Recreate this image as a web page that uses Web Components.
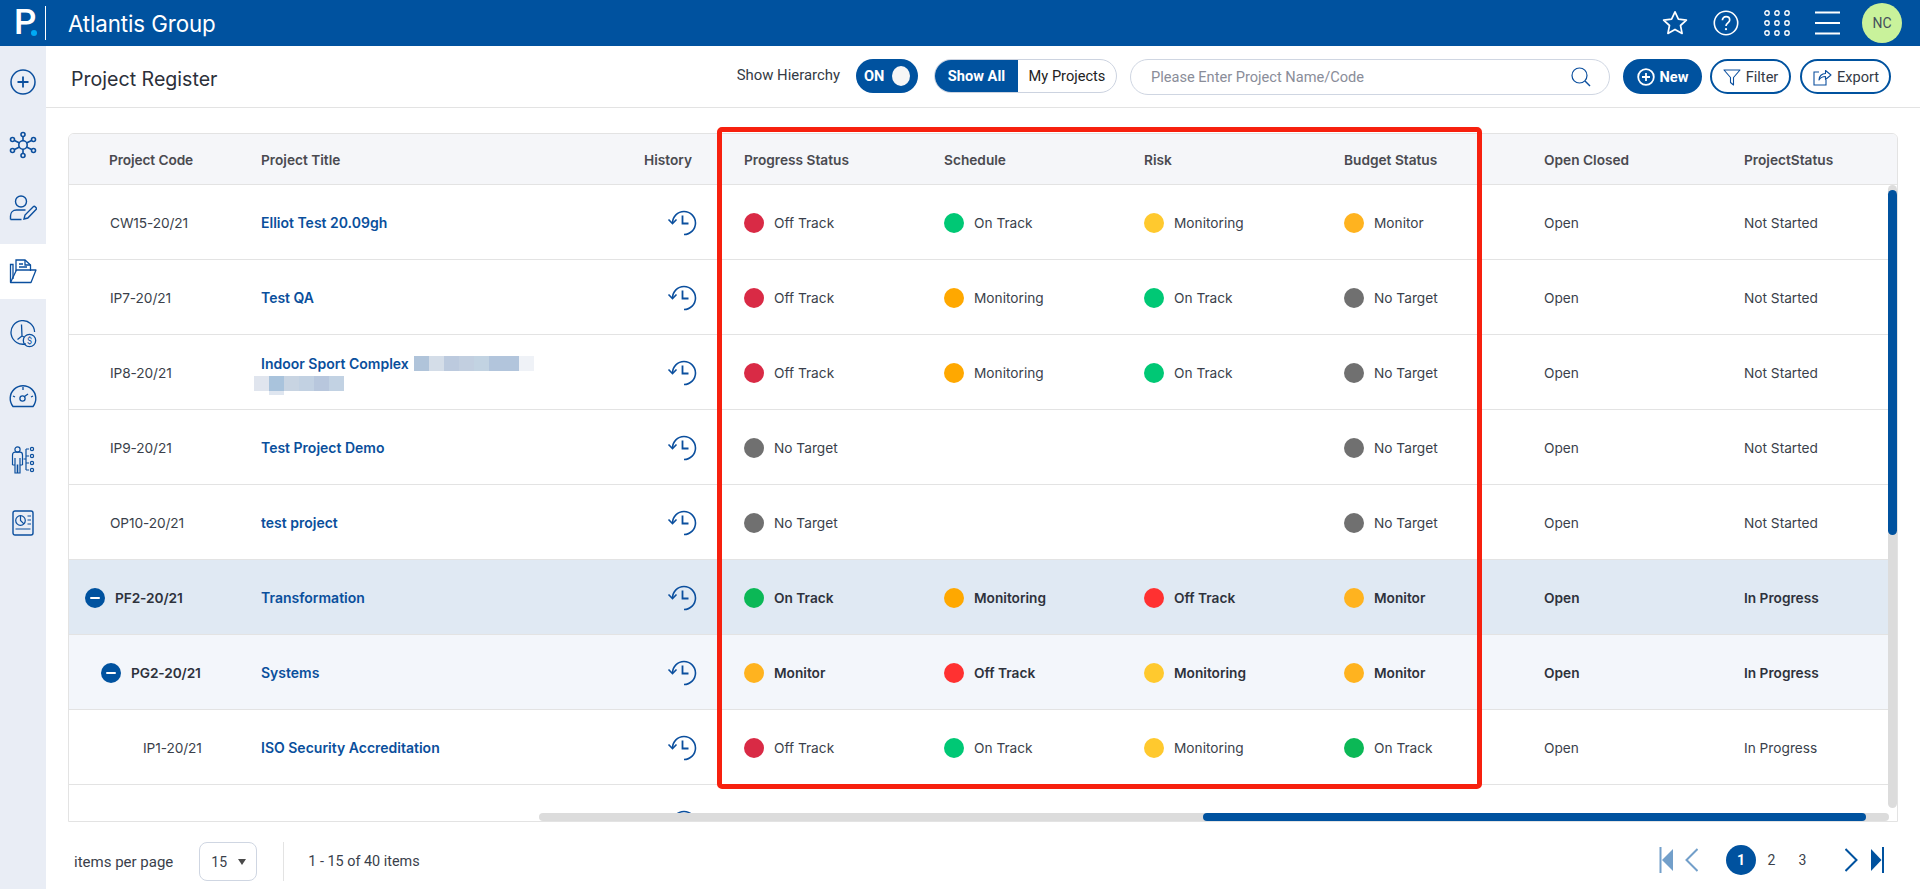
<!DOCTYPE html>
<html lang="en"><head><meta charset="utf-8"><title>Project Register</title>
<style>
html,body{margin:0;height:889px;overflow:hidden;background:#fff;font-family:Inter,"Liberation Sans",sans-serif;color:#3a3f4b}
</style></head><body>
<app-shell>
  <app-header slot="header" company="Atlantis Group" initials="NC"></app-header>
  <side-nav slot="nav"></side-nav>
  <page-toolbar slot="toolbar" heading="Project Register"></page-toolbar>
  <reg-table slot="table">
    <reg-row head><code-cell nudge>Project Code</code-cell><reg-cell>Project Title</reg-cell><reg-cell>History</reg-cell><reg-cell>Progress Status</reg-cell><reg-cell>Schedule</reg-cell><reg-cell>Risk</reg-cell><reg-cell>Budget Status</reg-cell><reg-cell>Open Closed</reg-cell><reg-cell>ProjectStatus</reg-cell></reg-row>

    <reg-row><code-cell>CW15-20/21</code-cell><title-cell>Elliot Test 20.09gh</title-cell><hist-cell></hist-cell><status-cell tone="crimson">Off Track</status-cell><status-cell tone="green">On Track</status-cell><status-cell tone="yellow">Monitoring</status-cell><status-cell tone="amber">Monitor</status-cell><reg-cell>Open</reg-cell><reg-cell>Not Started</reg-cell></reg-row>

    <reg-row><code-cell>IP7-20/21</code-cell><title-cell>Test QA</title-cell><hist-cell></hist-cell><status-cell tone="crimson">Off Track</status-cell><status-cell tone="orange">Monitoring</status-cell><status-cell tone="green">On Track</status-cell><status-cell tone="grey">No Target</status-cell><reg-cell>Open</reg-cell><reg-cell>Not Started</reg-cell></reg-row>

    <reg-row><code-cell>IP8-20/21</code-cell><title-cell>Indoor Sport Complex <blur-patch></blur-patch></title-cell><hist-cell></hist-cell><status-cell tone="crimson">Off Track</status-cell><status-cell tone="orange">Monitoring</status-cell><status-cell tone="green">On Track</status-cell><status-cell tone="grey">No Target</status-cell><reg-cell>Open</reg-cell><reg-cell>Not Started</reg-cell></reg-row>

    <reg-row><code-cell>IP9-20/21</code-cell><title-cell>Test Project Demo</title-cell><hist-cell></hist-cell><status-cell tone="grey">No Target</status-cell><reg-cell></reg-cell><reg-cell></reg-cell><status-cell tone="grey">No Target</status-cell><reg-cell>Open</reg-cell><reg-cell>Not Started</reg-cell></reg-row>

    <reg-row><code-cell>OP10-20/21</code-cell><title-cell>test project</title-cell><hist-cell></hist-cell><status-cell tone="grey">No Target</status-cell><reg-cell></reg-cell><reg-cell></reg-cell><status-cell tone="grey">No Target</status-cell><reg-cell>Open</reg-cell><reg-cell>Not Started</reg-cell></reg-row>

    <reg-row bold tint="strong"><code-cell level="1" toggle>PF2-20/21</code-cell><title-cell>Transformation</title-cell><hist-cell></hist-cell><status-cell tone="leaf">On Track</status-cell><status-cell tone="orange">Monitoring</status-cell><status-cell tone="red">Off Track</status-cell><status-cell tone="amber">Monitor</status-cell><reg-cell>Open</reg-cell><reg-cell>In Progress</reg-cell></reg-row>

    <reg-row bold tint="soft"><code-cell level="2" toggle>PG2-20/21</code-cell><title-cell>Systems</title-cell><hist-cell></hist-cell><status-cell tone="amber">Monitor</status-cell><status-cell tone="red">Off Track</status-cell><status-cell tone="yellow">Monitoring</status-cell><status-cell tone="amber">Monitor</status-cell><reg-cell>Open</reg-cell><reg-cell>In Progress</reg-cell></reg-row>

    <reg-row><code-cell level="3">IP1-20/21</code-cell><title-cell>ISO Security Accreditation</title-cell><hist-cell></hist-cell><status-cell tone="crimson">Off Track</status-cell><status-cell tone="green">On Track</status-cell><status-cell tone="yellow">Monitoring</status-cell><status-cell tone="leaf">On Track</status-cell><reg-cell>Open</reg-cell><reg-cell>In Progress</reg-cell></reg-row>

    <reg-row><reg-cell></reg-cell><reg-cell></reg-cell><hist-cell></hist-cell><status-cell tone="crimson"></status-cell><status-cell tone="crimson"></status-cell><status-cell tone="crimson"></status-cell><status-cell tone="amber"></status-cell><reg-cell></reg-cell><reg-cell></reg-cell></reg-row>
  </reg-table>
  <pager-bar slot="footer"></pager-bar>
</app-shell>
<script>
const BLUE='#00529f';
function def(name,html,init){
  customElements.define(name,class extends HTMLElement{
    constructor(){super();const r=this.attachShadow({mode:'open'});r.innerHTML=typeof html==='function'?html(this):html;}
    connectedCallback(){
      if(typeof html==='function') this.shadowRoot.innerHTML=html(this);
      if(init) init(this);
    }
  });
}
const ic=(w,h,vb,body,extra='')=>`<svg width="${w}" height="${h}" viewBox="${vb}" fill="none" stroke="currentColor" ${extra}>${body}</svg>`;

def('app-shell',`<style>
:host{display:grid;grid-template:46px 1fr/46px 1fr;height:889px;width:1920px;overflow:hidden}
.h{grid-column:1/3}.n{grid-row:2}
.m{grid-row:2;grid-column:2;display:flex;flex-direction:column;min-width:0;min-height:0}
</style>
<div class="h"><slot name="header"></slot></div>
<div class="n"><slot name="nav"></slot></div>
<div class="m"><slot name="toolbar"></slot><slot name="table"></slot><slot name="footer"></slot></div>`);

def('app-header',el=>`<style>
:host{display:flex;align-items:center;height:46px;background:${BLUE};color:#fff}
.logo{width:45px;height:34px;border-right:1px solid #fff;position:relative;font:500 35px/34px Roboto,sans-serif;box-sizing:content-box;display:flex;justify-content:flex-start}
.logo b{font-weight:500;margin-left:14px;line-height:34px}
.logo i{position:absolute;left:31px;top:24px;width:6px;height:6px;border-radius:50%;background:#00aaf5}
.co{margin-left:22px;font-size:22.3px;font-weight:400;letter-spacing:-.1px}
.r{margin-left:auto;display:flex;align-items:center;margin-right:18px}
.r>*{display:block}
.av{width:40px;height:40px;border-radius:50%;background:#c9f29b;color:#44505c;font:400 14px/40px Roboto,sans-serif;text-align:center;margin-left:22px}
</style>
<div class="logo"><b>P</b><i></i></div><div class="co">${el.getAttribute('company')||''}</div>
<div class="r">
${ic(26,26,'0 0 26 26','<path d="M13 1.8l3.400 7.400 8 .9-5.900 5.400 1.600 7.900-7.100-4-7.100 4 1.600-7.900L1.600 10.100l8-.9z" stroke-width="1.700" stroke-linejoin="round"/>')}
<span style="width:25px"></span>
${ic(26,26,'0 0 26 26','<circle cx="13" cy="13" r="11.700" stroke-width="1.600"/><path d="M9.400 10.200c0-2.300 1.700-3.600 3.700-3.600s3.600 1.300 3.600 3.300c0 2.900-3.700 2.900-3.700 6" stroke-width="1.700"/><circle cx="13" cy="19.200" r="1.100" fill="currentColor" stroke="none"/>')}
<span style="width:25px"></span>
${ic(26,26,'0 0 26 26',[3,13,23].flatMap(y=>[3,13,23].map(x=>`<circle cx="${x}" cy="${y}" r="2.200" stroke-width="1.400"/>`)).join(''))}
<span style="width:25px"></span>
${ic(25,26,'0 0 25 26','<path d="M0 2.500h25M0 13h25M0 23.500h25" stroke-width="1.800"/>')}
<div class="av">${el.getAttribute('initials')||''}</div>
</div>`);

const navIcons=[
ic(26,26,'0 0 26 26','<circle cx="13" cy="13" r="12" stroke-width="1.500"/><path d="M13 7.500v11M7.500 13h11" stroke-width="1.800"/>'),
ic(30,30,'0 0 30 30','<circle cx="15" cy="15" r="4.200"/><path d="M15 11V7M15 19v4M11.500 13l-5-2.500M18.500 13l5-2.500M11.500 17l-5 2.500M18.500 17l5 2.500" /><circle cx="15" cy="4.500" r="2"/><circle cx="15" cy="25.500" r="2"/><circle cx="4.500" cy="9.500" r="2"/><circle cx="25.500" cy="9.500" r="2"/><circle cx="4.500" cy="20.500" r="2"/><circle cx="25.500" cy="20.500" r="2"/>','stroke-width="1.600"'),
ic(28,28,'0 0 28 28','<circle cx="12" cy="7.500" r="5.500"/><path d="M1.500 25.500v-3.500c0-3.500 2.500-6 6-6h9M1.500 25.500h11"/><path d="M15 25l1-4 8.500-8.500c1-.9 3.800 1.800 2.800 2.800L18.800 24z"/>','stroke-width="1.400"'),
ic(28,26,'0 0 28 26','<path d="M4 21V6.500H1.500V24"/><path d="M7 13V2h9l5.500 5V13" /><path d="M16 2v5h5.500M10 6h4M10 9h8"/><path d="M1.500 24.500h20.500L27 12H7.500z" stroke-linejoin="round"/>','stroke-width="1.300"'),
ic(28,28,'0 0 28 28','<path d="M17 23.800A11.800 11.800 0 1 1 25.600 12"/><path d="M12.500 4.500L13 16l-4.500 3.500M13 16l2 1"/><circle cx="20.500" cy="20.500" r="6.200"/><text x="20.500" y="23.800" font-size="9" text-anchor="middle" fill="currentColor" stroke="none" font-family="Roboto">$</text>','stroke-width="1.300"'),
ic(28,24,'0 0 28 24','<path d="M4 21.500a12.800 12.800 0 1 1 20 0z" stroke-linejoin="round" stroke-width="1.400"/><path d="M14 2v3M4 11l2 1M24 11l-2 1"/><circle cx="13.500" cy="13.500" r="2.600"/><path d="M15.500 11.500L19 9"/>','stroke-width="1.300"'),
ic(24,28,'0 0 24 28','<circle cx="6.500" cy="3.500" r="2.600"/><path d="M1.500 19V9c0-2 1.200-2.800 2.500-2.800h5c1.300 0 2.500.8 2.500 2.800v10M4 12v15h2.300V19h.4v8H9V12M1.500 19H4M9 19h2.500"/><path d="M12.500 13h2.500M15 3h3M15 10h3M15 17h3M15 24h3M15 3v21"/><circle cx="21" cy="3" r="1.600"/><circle cx="21" cy="10" r="1.600"/><circle cx="21" cy="17" r="1.600"/><circle cx="21" cy="24" r="1.600"/>','stroke-width="1.200"'),
ic(22,26,'0 0 22 26','<rect x="1" y="1" width="20" height="24" rx="2" stroke-width="1.400"/><circle cx="8.500" cy="10.500" r="4.800"/><path d="M8.500 5.700v4.800l3.400 3.400M15.500 6h3.500M15.500 10h3.500M15.500 14h3.500M3.500 19h15"/>','stroke-width="1.200"')
];
def('side-nav',`<style>
:host{display:flex;flex-direction:column;height:843px;background:#e9edf5;padding-top:8.5px;box-sizing:border-box;color:#0b4f9e;gap:8px}
div{height:55px;display:flex;align-items:center;justify-content:center}
.on{background:#fff}
</style>${navIcons.map((s,i)=>`<div class="${i==3?'on':''}">${s}</div>`).join('')}`);

def('page-toolbar',el=>`<style>
:host{display:flex;align-items:center;height:62px;box-sizing:border-box;border-bottom:1px solid #e3e3e3;padding:0 29px 0 25px;font:400 14.6px Roboto,sans-serif;color:#333a45}
h1{font:400 19.6px Inter,sans-serif;color:#2c303a;margin:5px auto 0 0}
.lab{margin-right:16px;margin-bottom:4px;font-size:14.9px}
.tog{width:62px;height:34px;border-radius:17px;background:${BLUE};color:#fff;font-weight:700;display:flex;align-items:center;padding:0 8px;box-sizing:border-box;justify-content:space-between;margin-right:16px;margin-bottom:1px}
.tog i{width:18px;height:20px;border-radius:50%;background:#f6f6f6}
.seg{display:flex;width:183px;height:34px;border:1px solid #ccd3e0;border-radius:17px;overflow:hidden;box-sizing:border-box;margin-right:13px;margin-bottom:1px;line-height:32px}
.seg b{width:83px;background:${BLUE};color:#fff;text-align:center;font-weight:700}
.seg span{flex:1;text-align:center;color:#222}
.se{width:480px;height:36px;border:1px solid #cfd6e2;border-radius:18px;box-sizing:border-box;display:flex;align-items:center;padding:1px 18px 0 20px;color:#8a8d99;margin-right:13px}
.se svg{margin-left:auto;color:#0b4f9e;margin-top:-1px}
.b{height:35px;border:2px solid ${BLUE};border-radius:18px;box-sizing:border-box;display:flex;align-items:center;justify-content:center;gap:5px;color:#333a45;padding-top:1px}
.b svg{margin-top:-1px}
.new{width:79px;background:${BLUE};color:#fff;font-weight:700;margin-right:8px}
.fi{width:81px;margin-right:9px}.ex{width:91px}
.fi svg,.ex svg{color:#0b4f9e}
</style>
<h1>${el.getAttribute('heading')||''}</h1>
<span class="lab">Show Hierarchy</span>
<div class="tog">ON<i></i></div>
<div class="seg"><b>Show All</b><span>My Projects</span></div>
<div class="se">Please Enter Project Name/Code${ic(20,20,'0 0 20 20','<circle cx="8.500" cy="8.500" r="7.500" stroke-width="1.200"/><path d="M14 14l5 5" stroke-width="1.400"/>')}</div>
<div class="b new">${ic(18,18,'0 0 18 18','<circle cx="9" cy="9" r="7.800" stroke-width="1.800"/><path d="M9 5v8M5 9h8" stroke-width="1.800"/>')}New</div>
<div class="b fi">${ic(18,18,'0 0 18 18','<path d="M1 2h16l-6.500 7.500V17l-3-2.500V9.500z" stroke-width="1.100" stroke-linejoin="round"/>')}Filter</div>
<div class="b ex">${ic(20,18,'0 0 20 18','<path d="M7 4H2v13h12v-5" stroke-width="1.100"/><path d="M7 12c0-4 3-6.500 6.500-6.500V2.500L19 7l-5.500 4.500V8.500C10.500 8.500 8.500 9.500 7 12z" stroke-width="1.100" stroke-linejoin="round"/>')}Export</div>`);

def('reg-table',`<style>
:host{display:block;position:relative;margin:25px 22px 0 22px;height:689px}
.clip{height:100%;border:1px solid #e3e3e3;border-radius:6px 6px 0 0;box-sizing:border-box;overflow:hidden;position:relative}
.vt{position:absolute;right:0;top:51px;width:9px;height:623px;background:#dcdcdc;border-radius:5px}
.vb{position:absolute;right:0;top:56px;width:9px;height:345px;background:${BLUE};border-radius:5px}
.ht{position:absolute;left:470px;right:8px;bottom:0;height:8px;background:#dcdcdc;border-radius:4px}
.hb{position:absolute;left:1134px;width:663px;bottom:0;height:8px;background:${BLUE};border-radius:4px}
.mark{position:absolute;left:649px;top:-6px;width:765px;height:662px;box-sizing:border-box;border:5px solid #f7200e;border-radius:5px;pointer-events:none}
</style>
<div class="clip"><slot></slot><div class="vt"></div><div class="vb"></div><div class="ht"></div><div class="hb"></div></div>
<div class="mark"></div>`);

def('reg-row',`<style>
:host{display:grid;grid-template-columns:192px 383px 100px repeat(6,200px);height:75px;box-sizing:border-box;border-bottom:1px solid #e3e3e3;padding-top:1px;align-items:center;font-size:13.7px;color:#3a3f4b;width:1875px}
:host([head]){height:51px;background:#f5f6f9;font-weight:600;color:#4a4a50}
:host([bold]){font-weight:600;color:#2e323c}
:host([tint=strong]){background:#e0e9f3}
:host([tint=soft]){background:#f3f6fb}
</style><slot></slot>`);

def('reg-cell',`<style>:host{display:block;min-width:0}</style><slot></slot>`);
def('title-cell',`<style>:host{display:block;font-weight:600;color:#0a4f9c;font-size:14px}</style><slot></slot>`);

def('code-cell',el=>{
 const lv=+el.getAttribute('level')||0,t=el.hasAttribute('toggle');
 const pad=el.hasAttribute('nudge')?40:lv==0?41:lv==1?16:lv==2?32:74;
 return `<style>:host{display:flex;align-items:center;gap:10px;padding-left:${pad}px;letter-spacing:-.1px}
 i{width:20px;height:20px;border-radius:50%;background:${BLUE};display:flex;align-items:center;justify-content:center;flex:none}
 i::after{content:"";width:10px;height:2px;background:#fff;border-radius:1px}</style>${t?'<i></i>':''}<span><slot></slot></span>`});

def('hist-cell',`<style>:host{display:block;padding-left:23px;height:26px;color:#0b4f9e}svg{display:block}</style>`+
 ic(30,26,'0 0 30 26','<path d="M5.500 13A11.500 11.500 0 1 1 17 24.500" stroke-width="1.600"/><path d="M1.500 9.500l4 4 4-4" stroke-width="1.600"/><path d="M15.500 5.500v8h6" stroke-width="1.800"/>'));

const tones={crimson:'#d92a45',green:'#00c875',leaf:'#0bb856',yellow:'#ffc92e',amber:'#ffb31f',orange:'#ffa800',red:'#ff3131',grey:'#707070'};
def('status-cell',el=>`<style>:host{display:flex;align-items:center;gap:10px}
i{width:20px;height:20px;border-radius:50%;background:${tones[el.getAttribute('tone')]};flex:none}</style><i></i><span><slot></slot></span>`);

const px=(c,h=15)=>`<u style="background:${c};height:${h}px"></u>`;
def('blur-patch',`<style>:host{display:block;position:relative;height:19px}
.l{display:flex;position:absolute}u{display:block;width:15px}
</style>
<div class="l" style="left:153px;top:-16px">${['#b0c4da','#d4dde8','#bccade','#c2cfe0','#c2d3e2','#b2c5dc','#b2c5dc','#eff2f7'].map(c=>px(c)).join('')}</div>
<div class="l" style="left:-7px;top:4px;align-items:flex-start"><u style="background:#e0e5ee;height:15px"></u><u style="background:linear-gradient(#a9c3dc 15px,#dfe6f0 15px);height:19px"></u>${['#c8d4e2','#c2d1e2','#b8c7dd','#c2d2e3'].map(c=>px(c)).join('')}</div>`);

def('pager-bar',`<style>
:host{display:flex;align-items:center;flex:1;font:400 15px Roboto,sans-serif;color:#3a3f4b;padding:12px 36px 0 28px}
.sel{width:58px;height:39px;border:1px solid #cfd6e2;border-radius:8px;box-sizing:border-box;margin:0 26px 0 26px;display:flex;align-items:center;justify-content:space-between;padding:0 10px 0 11px;font-size:14px;flex:none}
.sel i{width:0;height:0;border-left:4px solid transparent;border-right:4px solid transparent;border-top:6px solid #4a4a4a}
.div{width:1px;height:39px;background:#e3e3e3;margin-right:24px}
.cnt{font-size:14.4px}
.p{margin-left:auto;display:flex;align-items:center;color:${BLUE};margin-bottom:4px;font-size:14px}
.n1{width:30px;height:30px;border-radius:50%;background:${BLUE};color:#fff;font-weight:700;text-align:center;line-height:30px;margin:0 0 0 28px}
.n{width:31px;text-align:center;color:#3a3f4b}
.f{opacity:.55}
</style>
<span>items per page</span><div class="sel">15<i></i></div><div class="div"></div><span class="cnt">1 - 15 of 40 items</span>
<div class="p">
<span class="f" style="display:flex">${ic(14,26,'0 0 14 26','<path d="M1.500 0v26" stroke-width="2"/><path d="M14 2L3 13l11 11z" fill="currentColor" stroke="none"/>')}</span>
<span class="f" style="display:flex;margin-left:12px">${ic(13,26,'0 0 13 26','<path d="M12.500 2L1.500 13l11 11" stroke-width="2"/>')}</span>
<div class="n1">1</div><div class="n">2</div><div class="n">3</div>
<span style="display:flex;margin-left:27px">${ic(13,26,'0 0 13 26','<path d="M.5 2l11 11L.5 24" stroke-width="2"/>')}</span>
<span style="display:flex;margin-left:13px">${ic(13,26,'0 0 13 26','<path d="M12 0v26" stroke-width="2"/><path d="M0 2l10.500 11L0 24z" fill="currentColor" stroke="none"/>')}</span>
</div>`);
</script>
</body></html>
